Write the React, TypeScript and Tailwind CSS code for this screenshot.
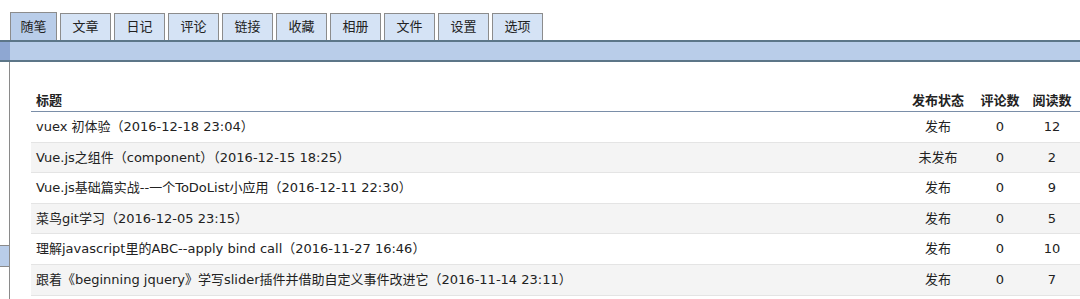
import React from "react";

const tabs = ["随笔", "文章", "日记", "评论", "链接", "收藏", "相册", "文件", "设置", "选项"];

const rows = [
  { title: "vuex 初体验（2016-12-18 23:04）", status: "发布", comments: 0, views: 12 },
  { title: "Vue.js之组件（component）（2016-12-15 18:25）", status: "未发布", comments: 0, views: 2 },
  { title: "Vue.js基础篇实战--一个ToDoList小应用（2016-12-11 22:30）", status: "发布", comments: 0, views: 9 },
  { title: "菜鸟git学习（2016-12-05 23:15）", status: "发布", comments: 0, views: 5 },
  { title: "理解javascript里的ABC--apply bind call（2016-11-27 16:46）", status: "发布", comments: 0, views: 10 },
  { title: "跟着《beginning jquery》学写slider插件并借助自定义事件改进它（2016-11-14 23:11）", status: "发布", comments: 0, views: 7 },
];

const App = () => {
  return (
    <div
      className="w-[1080px] h-[299px] overflow-hidden bg-white text-[13px] text-[#222]"
      style={{ fontFamily: '"DejaVu Sans", Verdana, "Noto Sans CJK SC", sans-serif' }}
    >
      {/* tab strip */}
      <div className="flex h-[40px] items-end pl-[10px] gap-[3px]">
        {tabs.map((t, i) => (
          <div
            key={t}
            className={
              i === 0
                ? "h-[28px] w-[47px] border border-b-0 border-[#8c8c8c] bg-[#b9cde9] flex items-center justify-center"
                : "h-[27px] w-[51px] border border-b-0 border-[#8c8c8c] bg-[#d5e3f5] flex items-center justify-center"
            }
          >
            {t}
          </div>
        ))}
      </div>

      <div className="flex">
        {/* left sidebar strip */}
        <div className="w-[10px] shrink-0 flex flex-col">
          <div className="h-[22px] bg-[#8ea7d2] border-t-2 border-b-2 border-[#5c7688]" />
          <div className="h-[183px] border-r border-[#8a8a8a]" />
          <div className="h-[22px] bg-[#b9cde9] border-y border-r border-[#8a8a8a]" />
          <div className="h-[40px] border-r border-[#8a8a8a]" />
        </div>

        <div className="flex-1 flex flex-col">
          {/* blue bar */}
          <div className="h-[22px] bg-[#b9cde9] border-t-2 border-b-2 border-[#5c7688]" />

          {/* table */}
          <div className="pl-[21px] pt-[29px]">
            <div className="flex h-[21px] items-end pb-[1px] font-bold border-b border-[#7a8ea8]">
              <div className="flex-1 pl-[5px]">标题</div>
              <div className="w-[76px] text-center">发布状态</div>
              <div className="w-[48px] text-center">评论数</div>
              <div className="w-[56px] text-center">阅读数</div>
            </div>
            {rows.map((r, i) => (
              <div
                key={i}
                className={
                  "flex h-[30.6px] items-center border-b border-[#e4e4e4] " +
                  (i % 2 === 1 ? "bg-[#f4f4f4]" : "bg-white")
                }
              >
                <div className="flex-1 pl-[5px] whitespace-nowrap">{r.title}</div>
                <div className="w-[76px] text-center">{r.status}</div>
                <div className="w-[48px] text-center">{r.comments}</div>
                <div className="w-[56px] text-center">{r.views}</div>
              </div>
            ))}
          </div>
        </div>
      </div>
    </div>
  );
};

export default App;
